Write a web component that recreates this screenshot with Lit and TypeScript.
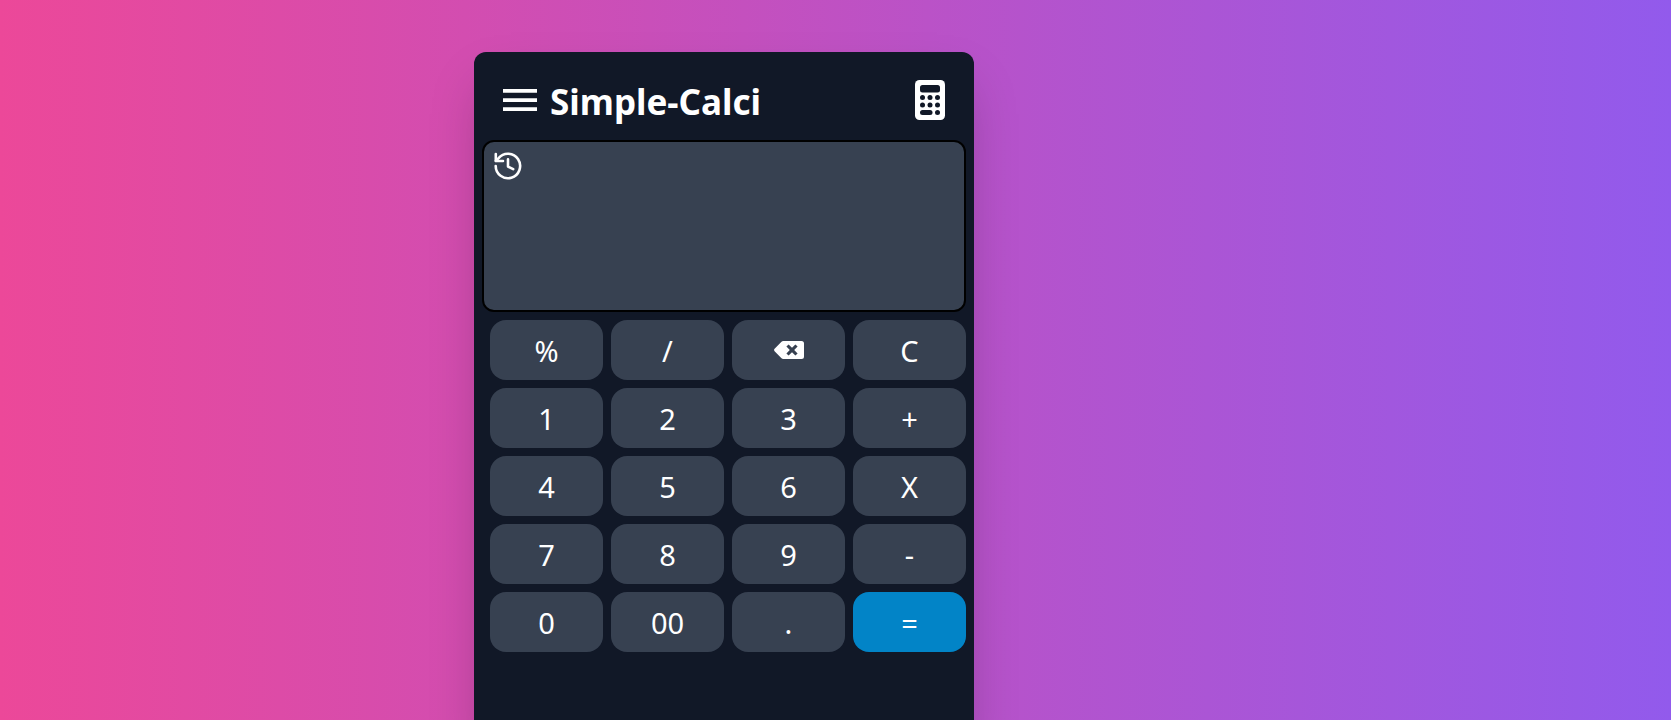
import { LitElement, html, css, svg } from "lit";
import { customElement, state } from "lit/decorators.js";

type Key = { label: string; name?: string; accent?: boolean };

const KEYS: Key[] = [
  { label: "%" }, { label: "/" }, { label: "back", name: "Backspace" }, { label: "C", name: "Clear" },
  { label: "1" }, { label: "2" }, { label: "3" }, { label: "+" },
  { label: "4" }, { label: "5" }, { label: "6" }, { label: "X" },
  { label: "7" }, { label: "8" }, { label: "9" }, { label: "-" },
  { label: "0" }, { label: "00" }, { label: "." }, { label: "=", accent: true },
];

const backspaceIcon = html`<svg class="back-icon" viewBox="0 0 30 18" aria-hidden="true">
  <path fill="currentColor" fill-rule="evenodd" d="M9.2 0H27.5A2.5 2.5 0 0 1 30 2.5V15.5A2.5 2.5 0 0 1 27.5 18H9.2A2.5 2.5 0 0 1 7.5 17.3L.6 10.2A1.8 1.8 0 0 1 .6 7.8L7.5 .7A2.5 2.5 0 0 1 9.2 0ZM14.6 3.4L12.4 5.6 15.8 9 12.4 12.4 14.6 14.6 18 11.2 21.4 14.6 23.6 12.4 20.2 9 23.6 5.6 21.4 3.4 18 6.8Z"/>
</svg>`;

const menuIcon = html`<svg class="menu-icon" viewBox="0 0 34 22" aria-hidden="true">
  <path fill="currentColor" d="M0 0H34V3.7H0ZM0 9.2H34V12.9H0ZM0 18.3H34V22H0Z"/>
</svg>`;

const historyIcon = html`<svg class="history-icon" viewBox="0 0 28 28" aria-hidden="true">
  <g fill="none" stroke="currentColor" stroke-width="2.6" stroke-linecap="round" stroke-linejoin="round">
    <path d="M1.7 14A12.2 12.2 0 1 0 4.6 6.1L1.9 8.8"/>
    <path d="M1.8 2V9H9"/>
    <path d="M14 7.4V14.6L19.2 17.2"/>
  </g>
</svg>`;

const dots = [
  [7.5, 17.5], [15, 17.5], [22.5, 17.5],
  [7.5, 25], [15, 25], [22.5, 25],
  [22.5, 32.5],
];

const calculatorIcon = html`<svg class="calc-icon" viewBox="0 0 30 40" aria-hidden="true">
  <rect width="30" height="40" rx="4.5" fill="currentColor"/>
  <g class="cut">
    <rect x="5" y="5" width="20" height="7.5" rx="2.5"/>
    <rect x="5" y="30" width="12.5" height="5" rx="2.5"/>
    ${dots.map(([x, y]) => svg`<circle cx=${x} cy=${y} r="2.5"/>`)}
  </g>
</svg>`;

@customElement("app-root")
export class AppRoot extends LitElement {
  @state() private entry = "";

  static styles = css`
    :host {
      display: block;
      font-family: "Noto Sans", "Open Sans", sans-serif;
      color: #fff;
    }
    * {
      box-sizing: border-box;
    }
    .page {
      display: flex;
      justify-content: center;
      height: 100vh;
      padding: 52px 223px 0 0;
      overflow: hidden;
      background: linear-gradient(to right, #ec4899, #925aec);
    }
    .card {
      display: flex;
      flex-direction: column;
      flex: 0 1 500px;
      min-height: 700px;
      padding: 8px;
      border-radius: 12px;
      background: #111827;
      box-shadow: 0 25px 50px -12px rgba(0, 0, 0, 0.25);
    }
    .bar {
      display: flex;
      align-items: center;
      height: 80px;
      padding: 0 21px;
    }
    .title {
      flex: 1;
      margin: 0 0 0 13px;
      padding-top: 4px;
      font-size: 35px;
      line-height: 40px;
      font-weight: 700;
    }
    button {
      margin: 0;
      padding: 0;
      border: 0;
      background: none;
      color: inherit;
      font: inherit;
      cursor: pointer;
    }
    svg {
      display: block;
    }
    .menu-icon {
      width: 34px;
      height: 22px;
    }
    .calc-icon {
      width: 30px;
      height: 40px;
    }
    .cut {
      fill: #111827;
    }
    .screen {
      display: flex;
      flex-direction: column;
      align-items: flex-start;
      height: 172px;
      padding: 10px;
      border: 2px solid #000;
      border-radius: 12px;
      background: #374151;
    }
    .history-icon {
      width: 28px;
      height: 28px;
    }
    .entry {
      align-self: stretch;
      margin-top: auto;
      text-align: right;
      font-size: 35px;
      line-height: 40px;
    }
    .keys {
      display: grid;
      grid-template-columns: repeat(4, 1fr);
      gap: 8px;
      padding: 8px 0 0 8px;
    }
    .key {
      display: flex;
      align-items: center;
      justify-content: center;
      height: 60px;
      padding-top: 2px;
      border-radius: 16px;
      background: #374151;
      font-size: 29px;
      line-height: 36px;
    }
    .accent {
      background: #0284c7;
    }
    .icon-key {
      padding-top: 0;
    }
    .back-icon {
      width: 30px;
      height: 18px;
    }
  `;

  private press(label: string) {
    if (label === "C") this.entry = "";
    else if (label === "back") this.entry = this.entry.slice(0, -1);
    else if (label !== "=") this.entry += label;
  }

  render() {
    return html`
      <main class="page">
        <section class="card">
          <header class="bar">
            <button aria-label="Menu">${menuIcon}</button>
            <h1 class="title">Simple-Calci</h1>
            ${calculatorIcon}
          </header>
          <div class="screen">
            <button aria-label="History">${historyIcon}</button>
            <output class="entry">${this.entry}</output>
          </div>
          <div class="keys">
            ${KEYS.map(
              (k) => html`<button
                class="key ${k.accent ? "accent" : ""} ${k.label === "back" ? "icon-key" : ""}"
                aria-label=${k.name ?? k.label}
                @click=${() => this.press(k.label)}
              >${k.label === "back" ? backspaceIcon : k.label}</button>`
            )}
          </div>
        </section>
      </main>
    `;
  }
}
